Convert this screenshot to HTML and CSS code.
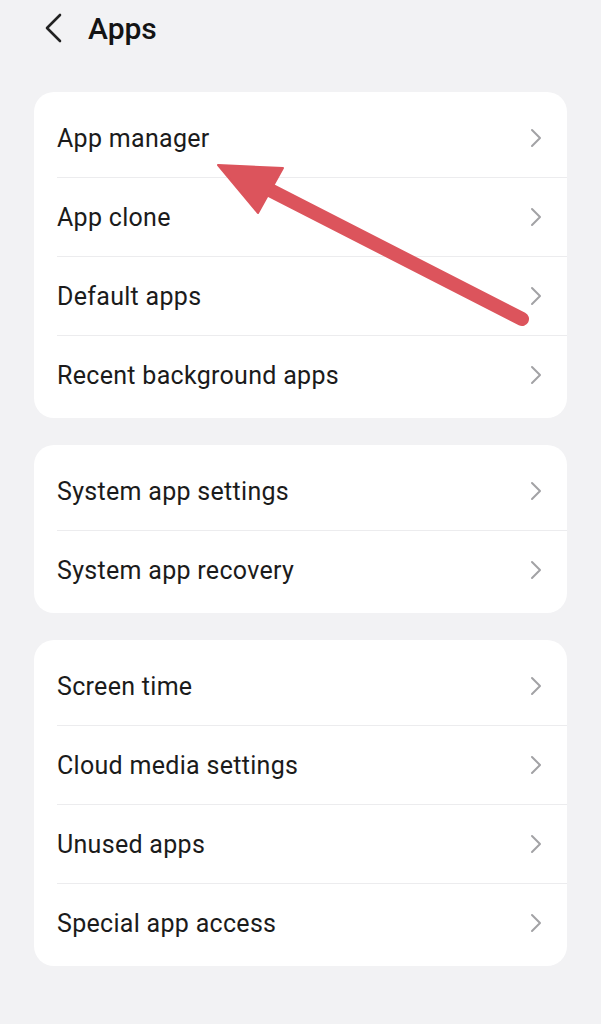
FILE: index.html
```html
<!DOCTYPE html>
<html>
<head>
<meta charset="utf-8">
<link rel="stylesheet" href="styles.css">
</head>
<body>
<div class="page">
  <header class="topbar">
    <svg class="back" width="20" height="30" viewBox="0 0 20 30"><path d="M16 2 L3 15 L16 28" fill="none" stroke="#222" stroke-width="2.6" stroke-linecap="round" stroke-linejoin="round"/></svg>
    <h1 class="title">Apps</h1>
  </header>

  <section class="card">
    <div class="row"><span class="label">App manager</span><svg class="chev" width="14" height="22" viewBox="0 0 14 22"><path d="M3 3 L11 11 L3 19" fill="none" stroke="#a2a2a5" stroke-width="2" stroke-linecap="round" stroke-linejoin="round"/></svg></div>
    <div class="row"><span class="label">App clone</span><svg class="chev" width="14" height="22" viewBox="0 0 14 22"><path d="M3 3 L11 11 L3 19" fill="none" stroke="#a2a2a5" stroke-width="2" stroke-linecap="round" stroke-linejoin="round"/></svg></div>
    <div class="row"><span class="label">Default apps</span><svg class="chev" width="14" height="22" viewBox="0 0 14 22"><path d="M3 3 L11 11 L3 19" fill="none" stroke="#a2a2a5" stroke-width="2" stroke-linecap="round" stroke-linejoin="round"/></svg></div>
    <div class="row"><span class="label">Recent background apps</span><svg class="chev" width="14" height="22" viewBox="0 0 14 22"><path d="M3 3 L11 11 L3 19" fill="none" stroke="#a2a2a5" stroke-width="2" stroke-linecap="round" stroke-linejoin="round"/></svg></div>
  </section>

  <section class="card">
    <div class="row"><span class="label">System app settings</span><svg class="chev" width="14" height="22" viewBox="0 0 14 22"><path d="M3 3 L11 11 L3 19" fill="none" stroke="#a2a2a5" stroke-width="2" stroke-linecap="round" stroke-linejoin="round"/></svg></div>
    <div class="row"><span class="label">System app recovery</span><svg class="chev" width="14" height="22" viewBox="0 0 14 22"><path d="M3 3 L11 11 L3 19" fill="none" stroke="#a2a2a5" stroke-width="2" stroke-linecap="round" stroke-linejoin="round"/></svg></div>
  </section>

  <section class="card">
    <div class="row"><span class="label">Screen time</span><svg class="chev" width="14" height="22" viewBox="0 0 14 22"><path d="M3 3 L11 11 L3 19" fill="none" stroke="#a2a2a5" stroke-width="2" stroke-linecap="round" stroke-linejoin="round"/></svg></div>
    <div class="row"><span class="label">Cloud media settings</span><svg class="chev" width="14" height="22" viewBox="0 0 14 22"><path d="M3 3 L11 11 L3 19" fill="none" stroke="#a2a2a5" stroke-width="2" stroke-linecap="round" stroke-linejoin="round"/></svg></div>
    <div class="row"><span class="label">Unused apps</span><svg class="chev" width="14" height="22" viewBox="0 0 14 22"><path d="M3 3 L11 11 L3 19" fill="none" stroke="#a2a2a5" stroke-width="2" stroke-linecap="round" stroke-linejoin="round"/></svg></div>
    <div class="row"><span class="label">Special app access</span><svg class="chev" width="14" height="22" viewBox="0 0 14 22"><path d="M3 3 L11 11 L3 19" fill="none" stroke="#a2a2a5" stroke-width="2" stroke-linecap="round" stroke-linejoin="round"/></svg></div>
  </section>

  <svg class="arrow" width="601" height="1024" viewBox="0 0 601 1024">
    <line x1="522" y1="319" x2="262" y2="186" stroke="#dc545c" stroke-width="14" stroke-linecap="round"/>
    <polygon points="218,165 283,168 258,213" fill="#dc545c" stroke="#dc545c" stroke-width="2" stroke-linejoin="round"/>
  </svg>
</div>
</body>
</html>
```

FILE: styles.css
```css
* { box-sizing: border-box; }
html, body {
  margin: 0;
  padding: 0;
  background: #f2f2f4;
}
body {
  font-family: Roboto, "Liberation Sans", sans-serif;
  color: #1b1b1b;
}
.page {
  position: relative;
  width: 601px;
  height: 1024px;
  overflow: hidden;
  padding: 0 34px;
}
.topbar {
  display: flex;
  align-items: center;
  height: 56px;
  padding-left: 10px;
  gap: 24px;
}
.back { display: block; }
.title {
  margin: 0;
  font-size: 30px;
  font-weight: 500;
  color: #141414;
}
.card {
  background: #fff;
  border-radius: 20px;
  padding: 7px 0 4px 23px;
  margin-top: 36px;
}
.card + .card { margin-top: 27px; }
.row {
  display: flex;
  align-items: center;
  justify-content: space-between;
  height: 79px;
  border-bottom: 1px solid #ececee;
  padding-right: 24px;
}
.row:last-child { border-bottom: none; height: 78px; }
.label {
  font-size: 25px;
  letter-spacing: 0.3px;
  color: #1b1b1b;
}
.chev { display: block; }
.arrow {
  position: absolute;
  left: 0;
  top: 0;
  pointer-events: none;
}
```
